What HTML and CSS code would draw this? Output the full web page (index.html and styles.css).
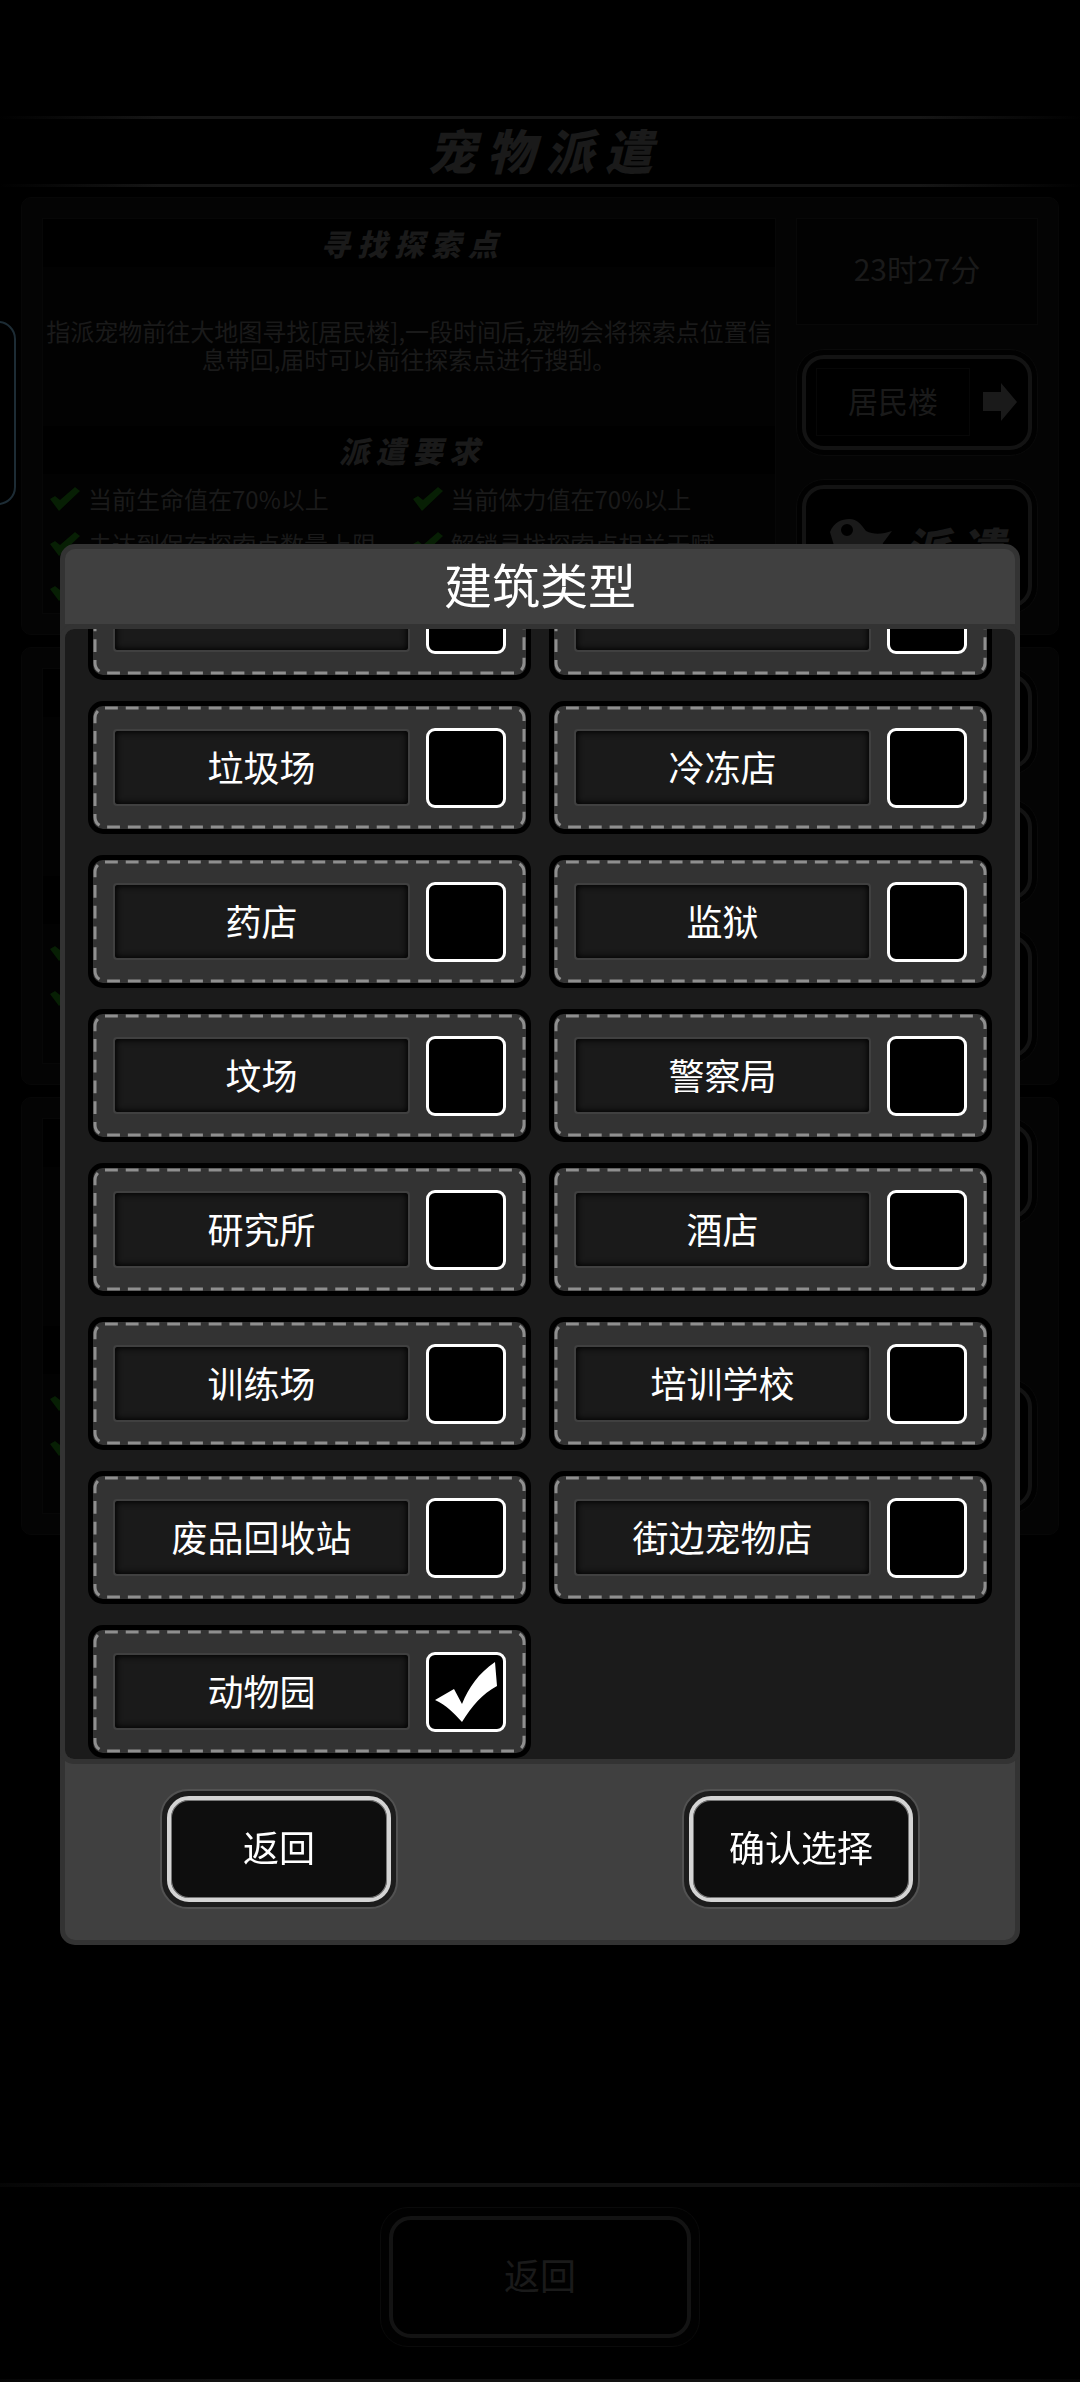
FILE: index.html
```html
<!DOCTYPE html>
<html lang="zh-CN">
<head>
<meta charset="utf-8">
<meta name="viewport" content="width=device-width, initial-scale=1">
<title>宠物派遣</title>
<link rel="stylesheet" href="styles.css">
</head>
<body>
<svg class="defs" aria-hidden="true">
  <symbol id="tick" viewBox="0 0 30 24"><path d="M0 12 L5 9 L10 13 L25 0 L30 4 L9 24 Z"/></symbol>
</svg>

<div class="page">
  <header class="page-title"><h1>宠 物 派 遣</h1></header>

  <main class="tasks">
    <section class="task">
      <div class="task-info">
        <h2>寻 找 探 索 点</h2>
        <p class="task-text">指派宠物前往大地图寻找[居民楼],一段时间后,宠物会将探索点位置信<br>息带回,届时可以前往探索点进行搜刮。</p>
        <h2>派 遣 要 求</h2>
        <ul class="needs">
          <li><svg class="tick"><use href="#tick"/></svg>当前生命值在70%以上</li>
          <li><svg class="tick"><use href="#tick"/></svg>当前体力值在70%以上</li>
          <li><svg class="tick"><use href="#tick"/></svg>未达到保存探索点数量上限</li>
          <li><svg class="tick"><use href="#tick"/></svg>解锁寻找探索点相关天赋</li>
          <li><svg class="tick"><use href="#tick"/></svg></li>
        </ul>
      </div>
      <div class="task-side">
        <div class="time">23时27分</div>
        <button class="btn dim pick" type="button"><span class="face"><span class="pick-name">居民楼</span>
          <svg class="arrow" viewBox="0 0 34 38"><path d="M0 9 H18 V0 L34 19 L18 38 V28 H0 Z"/></svg></span></button>
        <button class="btn dim send" type="button"><span class="face">
          <svg class="bird" viewBox="0 0 62 56"><path fill-rule="evenodd" d="M0 13 C4 3 12 0 19 0 C28 0 31 6 36 12 C44 16 53 15 62 12 L53 24 C50 36 40 48 22 50 L12 56 L14 44 C7 38 5 30 0 13 Z M17 5 A6 6 0 1 0 17 17 A6 6 0 1 0 17 5 Z"/></svg>
          <b>派 遣</b></span></button>
      </div>
    </section>

    <section class="task">
      <div class="task-info">
        <div class="strip"></div><div class="task-text"></div><div class="strip"></div>
        <ul class="needs">
          <li><svg class="tick"><use href="#tick"/></svg></li><li></li>
          <li><svg class="tick"><use href="#tick"/></svg></li>
        </ul>
      </div>
      <div class="task-side">
        <button class="btn dim pick" type="button" aria-label="选项一"><span class="face"></span></button>
        <button class="btn dim pick" type="button" aria-label="选项二"><span class="face"></span></button>
        <button class="btn dim send" type="button" aria-label="派遣"><span class="face"></span></button>
      </div>
    </section>

    <section class="task">
      <div class="task-info">
        <div class="strip"></div><div class="task-text"></div><div class="strip"></div>
        <ul class="needs">
          <li><svg class="tick"><use href="#tick"/></svg></li><li></li>
          <li><svg class="tick"><use href="#tick"/></svg></li>
        </ul>
      </div>
      <div class="task-side">
        <button class="btn dim pick" type="button" aria-label="选项"><span class="face"></span></button>
        <button class="btn dim send" type="button" aria-label="派遣"><span class="face"></span></button>
      </div>
    </section>
  </main>

  <footer class="page-foot"><button class="btn dim back" type="button"><span class="face">返回</span></button></footer>
</div>

<div class="handle"></div>

<div class="overlay">
  <form class="modal" role="dialog" aria-labelledby="dlg">
    <h2 class="modal-title" id="dlg">建筑类型</h2>
    <div class="scroller">
      <div class="grid">
        <label class="card"><svg class="dash"><rect rx="10" pathLength="1092"/></svg><span class="name"></span><input type="checkbox" aria-label="建筑一"></label>
        <label class="card"><svg class="dash"><rect rx="10" pathLength="1092"/></svg><span class="name"></span><input type="checkbox" aria-label="建筑二"></label>
        <label class="card"><svg class="dash"><rect rx="10" pathLength="1092"/></svg><span class="name">垃圾场</span><input type="checkbox"></label>
        <label class="card"><svg class="dash"><rect rx="10" pathLength="1092"/></svg><span class="name">冷冻店</span><input type="checkbox"></label>
        <label class="card"><svg class="dash"><rect rx="10" pathLength="1092"/></svg><span class="name">药店</span><input type="checkbox"></label>
        <label class="card"><svg class="dash"><rect rx="10" pathLength="1092"/></svg><span class="name">监狱</span><input type="checkbox"></label>
        <label class="card"><svg class="dash"><rect rx="10" pathLength="1092"/></svg><span class="name">坟场</span><input type="checkbox"></label>
        <label class="card"><svg class="dash"><rect rx="10" pathLength="1092"/></svg><span class="name">警察局</span><input type="checkbox"></label>
        <label class="card"><svg class="dash"><rect rx="10" pathLength="1092"/></svg><span class="name">研究所</span><input type="checkbox"></label>
        <label class="card"><svg class="dash"><rect rx="10" pathLength="1092"/></svg><span class="name">酒店</span><input type="checkbox"></label>
        <label class="card"><svg class="dash"><rect rx="10" pathLength="1092"/></svg><span class="name">训练场</span><input type="checkbox"></label>
        <label class="card"><svg class="dash"><rect rx="10" pathLength="1092"/></svg><span class="name">培训学校</span><input type="checkbox"></label>
        <label class="card"><svg class="dash"><rect rx="10" pathLength="1092"/></svg><span class="name">废品回收站</span><input type="checkbox"></label>
        <label class="card"><svg class="dash"><rect rx="10" pathLength="1092"/></svg><span class="name">街边宠物店</span><input type="checkbox"></label>
        <label class="card"><svg class="dash"><rect rx="10" pathLength="1092"/></svg><span class="name">动物园</span><input type="checkbox" checked><svg class="mark" viewBox="0 0 80 80"><path d="M9 48 L28 37 L36 52 C43 35 52 22 69 10 L71 34 C56 42 46 54 36 70 C28 61 20 53 9 48 Z"/></svg></label>
      </div>
    </div>
    <div class="actions">
      <button class="btn" type="button"><span class="face">返回</span></button>
      <button class="btn" type="submit"><span class="face">确认选择</span></button>
    </div>
  </form>
</div>
</body>
</html>
```
FILE: styles.css
```css
* { box-sizing: border-box; }

body {
  margin: 0;
  background: #000;
  color: #1a1a1a;
  font-family: "Noto Sans CJK SC", sans-serif;
}

h1, h2, p, ul { margin: 0; padding: 0; }
ul { list-style: none; }
.defs { display: none; }

/* dimmed page */
.page {
  min-height: 100vh;
  padding-top: 116px;
  display: flex;
  flex-direction: column;
}

.page-title {
  height: 71px;
  padding-bottom: 6px;
  display: flex;
  align-items: center;
  justify-content: center;
  border: solid transparent;
  border-width: 3px 0;
  border-image: linear-gradient(90deg, #000, #161616 15%, #161616 85%, #000) 3;
}

h1, .task h2, .send b {
  font-weight: 900;
  font-style: italic;
  white-space: nowrap;
}

h1 { font-size: 48px; line-height: 56px; }

.tasks {
  margin: 10px 21px 0;
  display: flex;
  flex-direction: column;
  gap: 12px;
}

.task {
  height: 438px;
  padding: 20px;
  display: flex;
  gap: 20px;
  background: #040404;
  border: 1px solid #070707;
  border-radius: 10px;
}

.task-info {
  flex: 1;
  display: flex;
  flex-direction: column;
  background: #020202;
  border: 1px solid #070707;
}

.task h2, .strip {
  height: 48px;
  flex: none;
  background: #000;
  font-size: 30px;
  line-height: 48px;
  text-align: center;
}

.task-text {
  height: 159px;
  padding-top: 50px;
  text-align: center;
  font-size: 24px;
  line-height: 28px;
  white-space: nowrap;
}

.needs {
  padding: 2px 0 2px 7px;
  display: grid;
  grid-template-columns: 1fr 1fr;
  grid-auto-rows: 45px;
  font-size: 24px;
}
.needs li { display: flex; align-items: center; gap: 8px; white-space: nowrap; }
.tick { width: 30px; height: 24px; fill: #071f04; }

.task-side {
  width: 242px;
  display: flex;
  flex-direction: column;
  justify-content: space-between;
}

.time {
  height: 107px;
  padding-bottom: 8px;
  display: flex;
  align-items: center;
  justify-content: center;
  background: #020202;
  border: 1px solid #080808;
  font-size: 30px;
}

/* double-ringed buttons */
.btn {
  width: 238px;
  height: 120px;
  padding: 5px;
  background: #1c1c1c;
  border: 2px solid #525252;
  border-radius: 28px;
  color: #fff;
  font: inherit;
  font-size: 36px;
}
.face {
  height: 100%;
  padding-bottom: 6px;
  display: flex;
  align-items: center;
  justify-content: center;
  background: #0e0e0e;
  border: 4px solid #d4d4d4;
  border-radius: 22px;
  box-shadow: inset 0 0 0 1px #777;
}
.btn.dim { background: #010101; border: 1px solid #0a0a0a; color: #1a1a1a; }
.dim .face { background: #000; border: 4px solid #131313; box-shadow: none; }
.pick, .send { width: 100%; }
.pick { height: 107px; }
.send { height: 135px; }

.pick .face { padding: 0 11px 0 10px; gap: 13px; font-size: 30px; }
.pick-name {
  flex: 1;
  height: 68px;
  line-height: 62px;
  border: 1px solid #070707;
}
.arrow { width: 34px; height: 38px; fill: #1a1a1a; }
.send .face { padding: 0; gap: 12px; }
.bird { width: 62px; height: 56px; fill: #1a1a1a; }
.send b { font-size: 45px; }

.page-foot {
  margin-top: auto;
  height: 199px;
  padding-top: 20px;
  display: flex;
  align-items: flex-start;
  justify-content: center;
  border: solid transparent;
  border-width: 4px 0 3px;
  border-image: linear-gradient(90deg, #050505, #121212 20%, #121212 80%, #050505) 4;
}
.btn.back { width: 320px; height: 140px; padding: 8px; }

.handle {
  position: absolute;
  left: -20px;
  top: 321px;
  width: 36px;
  height: 184px;
  border: 2px solid #1d2c35;
  border-radius: 18px;
}

/* building picker */
.overlay {
  position: absolute;
  top: 544px;
  left: 60px;
  right: 60px;
}
.modal {
  background: #404040;
  border: 5px solid #333;
  border-radius: 15px;
}
.modal-title {
  height: 80px;
  color: #fff;
  font-size: 48px;
  font-weight: 400;
  line-height: 68px;
  text-align: center;
  border-bottom: 5px solid #333;
}
.scroller {
  max-height: 1130px;
  display: flex;
  flex-direction: column-reverse;
  overflow-y: auto;
  scrollbar-width: none;
  background: #1b1b1b;
  border-radius: 9px;
  box-shadow: 0 0 0 5px #333;
}
.grid {
  padding: 10px 23px 1px;
  display: grid;
  grid-template-columns: 1fr 1fr;
  gap: 21px 18px;
}
.card {
  position: relative;
  height: 133px;
  padding: 0 20px;
  display: flex;
  align-items: center;
  gap: 16px;
  background: #333;
  border: 5px solid #000;
  border-radius: 15px;
}
.dash {
  position: absolute;
  inset: 0;
  width: 100%;
  height: 100%;
}
.dash rect {
  x: 2px;
  y: 2px;
  width: calc(100% - 4px);
  height: calc(100% - 4px);
  fill: none;
  stroke: #8f8f8f;
  stroke-width: 3px;
  stroke-dasharray: 13 8;
}
.name {
  flex: 1;
  height: 77px;
  color: #fff;
  font-size: 36px;
  line-height: 70px;
  text-align: center;
  background: #1a1a1a;
  border: 2px solid #404040;
  border-radius: 4px;
  box-shadow: inset 0 0 6px 1px #000;
}
.card input {
  appearance: none;
  width: 80px;
  height: 80px;
  margin: 0;
  background: #000;
  border: 3px solid #fff;
  border-radius: 9px;
}
.mark {
  position: absolute;
  right: 20px;
  width: 80px;
  height: 80px;
  fill: #fff;
}
.actions {
  padding: 30px 95px 31px;
  display: flex;
  justify-content: space-between;
}
```
